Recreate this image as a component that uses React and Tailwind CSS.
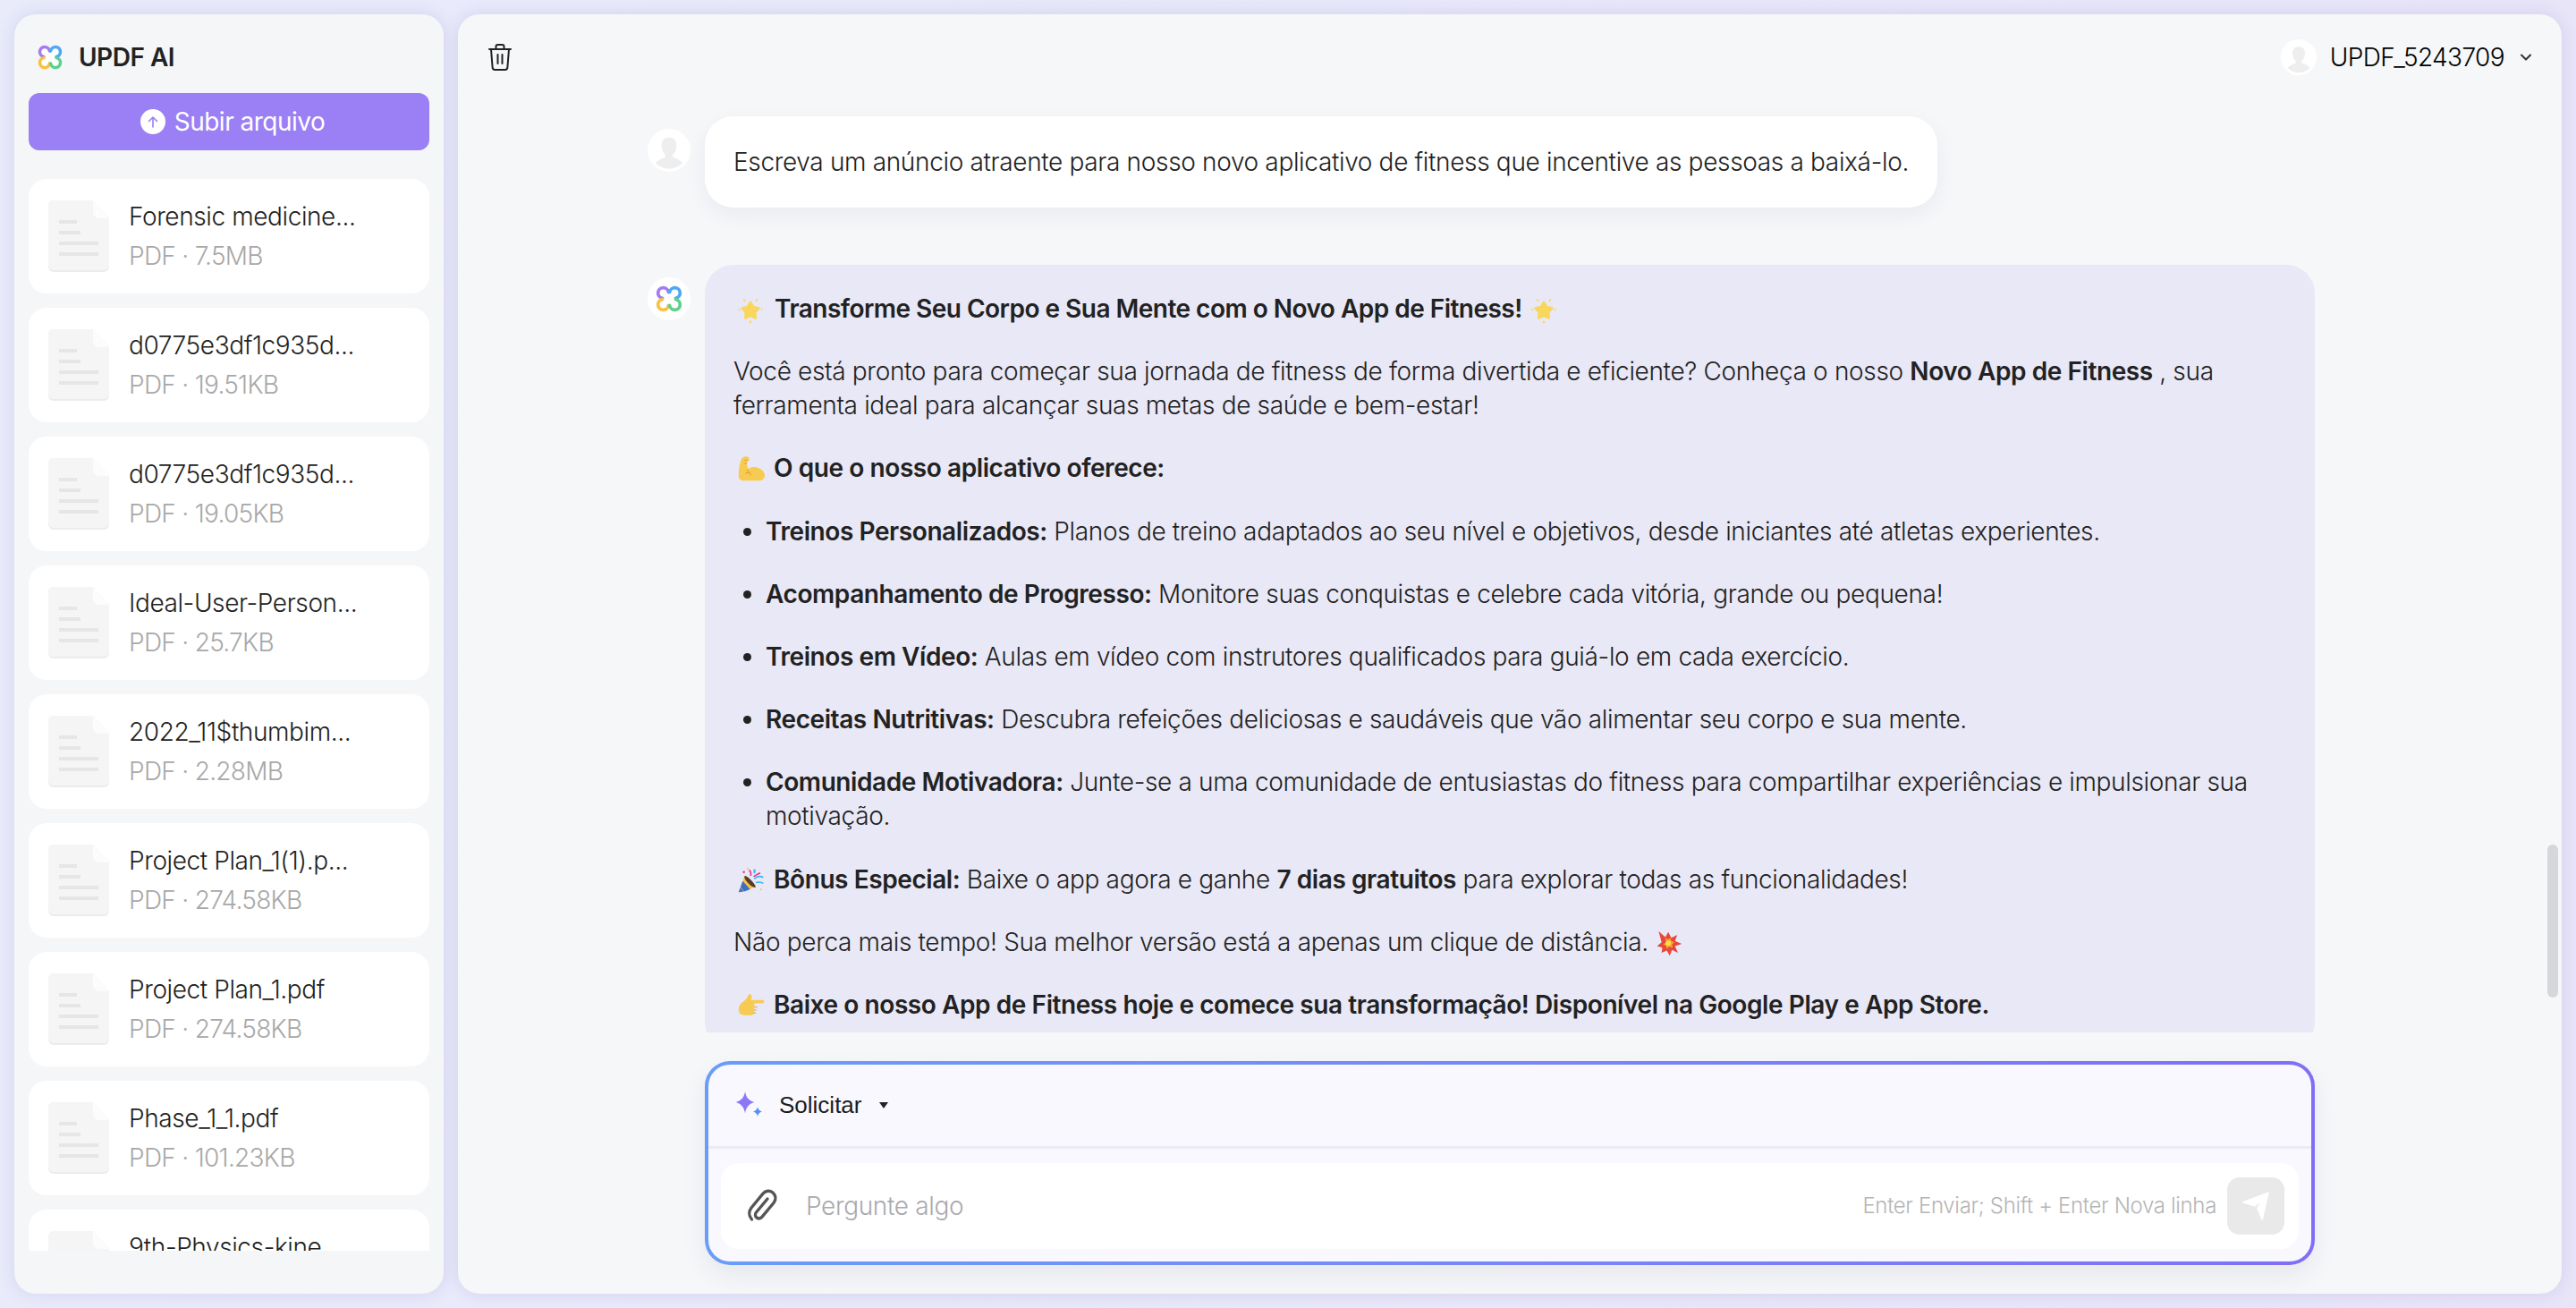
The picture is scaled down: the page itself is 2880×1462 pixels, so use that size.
import { ChevronDown } from 'lucide-react';

const files = [
  { name: 'Forensic medicine...', meta: 'PDF · 7.5MB' },
  { name: 'd0775e3df1c935d...', meta: 'PDF · 19.51KB' },
  { name: 'd0775e3df1c935d...', meta: 'PDF · 19.05KB' },
  { name: 'Ideal-User-Person...', meta: 'PDF · 25.7KB' },
  { name: '2022_11$thumbim...', meta: 'PDF · 2.28MB' },
  { name: 'Project Plan_1(1).p...', meta: 'PDF · 274.58KB' },
  { name: 'Project Plan_1.pdf', meta: 'PDF · 274.58KB' },
  { name: 'Phase_1_1.pdf', meta: 'PDF · 101.23KB' },
  { name: '9th-Physics-kine...', meta: 'PDF · 1.2MB' },
];

const bullets = [
  ['Treinos Personalizados:', ' Planos de treino adaptados ao seu nível e objetivos, desde iniciantes até atletas experientes.'],
  ['Acompanhamento de Progresso:', ' Monitore suas conquistas e celebre cada vitória, grande ou pequena!'],
  ['Treinos em Vídeo:', ' Aulas em vídeo com instrutores qualificados para guiá-lo em cada exercício.'],
  ['Receitas Nutritivas:', ' Descubra refeições deliciosas e saudáveis que vão alimentar seu corpo e sua mente.'],
  ['Comunidade Motivadora:', ' Junte-se a uma comunidade de entusiastas do fitness para compartilhar experiências e impulsionar sua motivação.'],
];

function Logo({ className }) {
  return (
    <svg viewBox="0 0 28 28" fill="none" className={className}>
      <path d="M14 14L6 6M14 14L22 6M14 14L6 22M14 14L22 22" stroke="#fff" strokeWidth="8" />
      <g strokeWidth="3.5" strokeLinecap="round">
        <path d="M13.400 7A5.500 5.500 0 1 0 7 13.400" stroke="#a77bf0" />
        <path d="M14.600 7A5.500 5.500 0 1 1 21 13.400" stroke="#4ea8f6" />
        <path d="M7 14.600A5.500 5.500 0 1 0 13.400 21" stroke="#f8c23d" />
        <path d="M21 14.600A5.500 5.500 0 1 1 14.600 21" stroke="#5fd08e" />
      </g>
    </svg>
  );
}

function Person({ className }) {
  return (
    <div className={`rounded-full bg-white overflow-hidden shrink-0 ${className}`}>
      <svg viewBox="0 0 40 40" className="w-full h-full">
        <path d="M20 8c4.500 0 7 3 7 7.500 0 4-1.500 7-3.500 8.500v2.500c3 1 7 2.500 9 5.500-3 3-7.500 5-12.500 5s-9.500-2-12.500-5c2-3 6-4.500 9-5.500V24c-2-1.500-3.500-4.500-3.500-8.500C13 11 15.500 8 20 8z" fill="#eeeeee" />
      </svg>
    </div>
  );
}

function FileIcon() {
  return (
    <svg viewBox="0 0 68 80" className="w-[68px] h-[80px] shrink-0">
      <path d="M6 0h44l18 20v54a6 6 0 0 1-6 6H6a6 6 0 0 1-6-6V6a6 6 0 0 1 6-6z" fill="#ececec" />
      <path d="M6 0h44l18 20v52a6 6 0 0 1-6 6H6a6 6 0 0 1-6-6V6a6 6 0 0 1 6-6z" fill="#f5f5f5" />
      <path d="M50 0l18 20H57a7 7 0 0 1-7-7z" fill="#fcfcfc" />
      <rect x="12" y="22" width="20" height="4" fill="#e6e6e6" />
      <rect x="12" y="34" width="24" height="4" fill="#e6e6e6" />
      <rect x="12" y="46" width="44" height="4" fill="#e6e6e6" />
      <rect x="12" y="58" width="44" height="4" fill="#e6e6e6" />
    </svg>
  );
}

function StarEmoji({ className = '' }) {
  return (
    <svg viewBox="0 0 28 28" className={`inline-block w-[28px] h-[28px] align-[-6px] ${className}`} fill="#f9d65c">
      <path
        d="M14 4.500L17.200 10L23.500 11.400L19.200 16.200L19.900 22.600L14 20L8.100 22.600L8.800 16.200L4.500 11.400L10.800 10z"
        stroke="#f9d65c"
        strokeWidth="2.400"
        strokeLinejoin="round"
      />
      <path d="M5.500 .5L9 3l-2 1.500zM22.500 .5L19 3l2 1.500zM0 11.500l2.500 1-.8 2.500zM28 11.500l-2.500 1 .8 2.500zM14 24.500l1.500 3.500h-3z" />
    </svg>
  );
}

function MuscleEmoji() {
  return (
    <svg viewBox="0 0 36 36" className="inline-block w-[30px] h-[30px] align-[-6px] ml-[5px] mr-[10px]">
      <path d="M6 3c3-2 8-2 9 1 1 2.500-1 4-3 5 0 3 .5 6 2 9 4-3 10-3 14-1 5 2 8 6 8 10 0 4-3 7-8 7H8c-4 0-7-2-7-6 0-9 1-19 5-25z" fill="#f7cb52" />
      <path d="M9 7c2-1 3.500-.8 4-.2M9 11c1.500 0 2.500-.5 3-1.500M12 19l3 4M10 24l5-1 3 4" stroke="#d98e2b" strokeWidth="1" fill="none" />
    </svg>
  );
}

function PartyEmoji() {
  return (
    <svg viewBox="0 0 36 36" className="inline-block w-[30px] h-[30px] align-[-6px] ml-[5px] mr-[10px]">
      <path d="M1 34L9 12l15 15z" fill="#f4c542" />
      <path d="M3.500 27l3-8 10 11-8 3zM1 34l2-6 5 5z" fill="#3f6ec9" />
      <path d="M9 12c4 0 14 10 15 15-3 1-7-1-10-5-3-3-6-7-5-10z" fill="#5b3a29" />
      <path d="M22 16c4-4 8-4 12-2M24 21c3-1 6-1 10 1" stroke="#38b6f0" strokeWidth="2" fill="none" />
      <path d="M17 12c1-3 0-6-2-8M21 13c3-2 6-4 9-5" stroke="#e8358f" strokeWidth="2" fill="none" />
      <circle cx="8" cy="7" r="1.500" fill="#e8358f" />
      <circle cx="13" cy="2" r="1.200" fill="#f4c542" />
      <path d="M21 3l3 1-1 5-2-1z" fill="#38b6f0" />
      <circle cx="31" cy="30" r="1.200" fill="#f4c542" />
    </svg>
  );
}

function HandEmoji() {
  return (
    <svg viewBox="0 0 36 36" className="inline-block w-[30px] h-[30px] align-[-6px] ml-[5px] mr-[10px]">
      <path d="M1 24c0-5 2-9 6-11 3-2 6-5 7-9 .6-2 4-2 4.500 1 .4 2-.5 4-1 5.500H33c3 0 3 4.500 0 4.500H22v12c0 3-3 4-6 4h-5C5 31 1 29 1 24z" fill="#f7cb52" />
      <path d="M22 20h4M22 24h3M21 28h3" stroke="#d98e2b" strokeWidth="1" fill="none" />
    </svg>
  );
}

function BoomEmoji() {
  return (
    <svg viewBox="0 0 36 36" className="inline-block w-[30px] h-[30px] align-[-7px] ml-[1px]">
      <path d="M4 1l9 8 4-7 4 8 8-4-3 8 9 4-9 3 4 9-8-4-3 8-4-7-7 3 1-7-7-2 6-5z" fill="#e8483c" />
      <path d="M13 10l4 2 3-2 1 4 4 2-3 3 1 4-5-1-3 3-1-5-4-1 4-3z" fill="#f4a62a" />
      <circle cx="17" cy="17" r="3.500" fill="#fbdc4c" />
    </svg>
  );
}

function Sparkle() {
  return (
    <svg viewBox="0 0 32 32" className="w-[32px] h-[32px] shrink-0">
      <path d="M11 0c1 6.500 4 10 10.500 12C15 14 12 17.500 11 24.500 10 17.500 7 14 .5 12 7 10 10 6.500 11 0z" fill="#8b78f6" />
      <path d="M25 17c.5 3 2 4.500 5 5.500-3 1-4.500 2.500-5 5.500-.5-3-2-4.500-5-5.500 3-1 4.500-2.500 5-5.500z" fill="#4f93f5" />
    </svg>
  );
}

export default function App() {
  return (
    <div
      className="flex w-screen h-screen gap-[16px] p-[16px] overflow-hidden bg-gradient-to-r from-[#e9ebfb] to-[#e8e5f9] text-[#222222]"
      style={{ fontFamily: 'Inter, "Noto Sans", sans-serif' }}
    >
      {/* Sidebar */}
      <aside className="flex flex-col w-[480px] shrink-0 rounded-[24px] bg-[#f5f6f8] px-[16px] pb-[48px] shadow-[0_0_18px_rgba(90,90,170,0.16)]">
        <div className="flex items-center h-[88px] pt-[8px] pl-[10px] gap-[18px]">
          <Logo className="w-[28px] h-[28px]" />
          <span className="text-[28px] font-semibold tracking-[-0.5px]">UPDF AI</span>
        </div>
        <button className="flex items-center justify-center gap-[10px] h-[64px] pl-[8px] rounded-[12px] bg-[#9b7ff5] text-white text-[28px] font-normal tracking-[-0.5px]">
          <span className="flex items-center justify-center w-[28px] h-[28px] rounded-full bg-white">
            <svg viewBox="0 0 16 16" className="w-[16px] h-[16px]" fill="none" stroke="#9b7ff5" strokeWidth="1.600" strokeLinecap="round" strokeLinejoin="round">
              <path d="M8 14V3M3.500 7.500L8 3l4.500 4.500" />
            </svg>
          </span>
          Subir arquivo
        </button>
        <div className="flex flex-col flex-1 min-h-0 gap-[16px] mt-[32px] overflow-hidden">
          {files.map((f, i) => (
            <div key={i} className="flex items-center shrink-0 h-[128px] rounded-[20px] bg-white pl-[22px]">
              <FileIcon />
              <div className="ml-[22px]">
                <div className="text-[28px] leading-[44px] font-light tracking-[-0.4px]">{f.name}</div>
                <div className="text-[28px] leading-[44px] font-light tracking-[-0.7px] text-[#a8a8a8]">{f.meta}</div>
              </div>
            </div>
          ))}
        </div>
      </aside>

      {/* Main panel */}
      <main className="relative flex flex-col flex-1 min-w-0 rounded-[24px] bg-[#f6f7f9] shadow-[0_0_18px_rgba(90,90,170,0.16)]">
        <header className="flex items-center justify-between h-[96px] shrink-0 pl-[34px] pr-[30px]">
          <svg viewBox="0 0 26 30" className="w-[26px] h-[30px]" fill="none" stroke="#222222" strokeWidth="2" strokeLinecap="round" strokeLinejoin="round">
            <path d="M1 6h24M8.500 6V3a2 2 0 0 1 2-2h5a2 2 0 0 1 2 2v3M3 6l1.600 20a3 3 0 0 0 3 3h10.800a3 3 0 0 0 3-3L23 6M10.500 12v10M15.500 12v10" />
          </svg>
          <div className="flex items-center">
            <Person className="w-[40px] h-[40px]" />
            <span className="ml-[15px] text-[28px] font-light text-black tracking-[-0.6px]">UPDF_5243709</span>
            <ChevronDown strokeWidth={2.5} className="ml-[14px] w-[20px] h-[20px] text-[#333333]" />
          </div>
        </header>

        <div className="flex-1 min-h-0 overflow-hidden pt-[18px] pl-[212px] text-[28px] leading-[38px] font-light tracking-[-0.34px]">
          <div className="flex gap-[16px]">
            <Person className="w-[48px] h-[48px] mt-[14px]" />
            <div className="rounded-[32px] bg-white px-[32px] py-[32px] shadow-[0_8px_24px_rgba(40,40,80,0.06)]">
              Escreva um anúncio atraente para nosso novo aplicativo de fitness que incentive as pessoas a baixá-lo.
            </div>
          </div>
          <div className="flex gap-[16px] mt-[64px]">
            <div className="flex items-center justify-center w-[48px] h-[48px] mt-[14px] rounded-full bg-white shrink-0">
              <Logo className="w-[30px] h-[30px]" />
            </div>
            <div className="w-[1800px] shrink-0 rounded-[32px] bg-[#e9e8f6] px-[32px] pt-[30px] pb-[32px] [&_b]:font-semibold [&_b]:tracking-[-0.42px]">
              <p className="[&_b]:tracking-[-0.52px]">
                <StarEmoji className="ml-[5px] mr-[13px]" />
                <b>Transforme Seu Corpo e Sua Mente com o Novo App de Fitness!</b>
                <StarEmoji className="ml-[10px]" />
              </p>
              <p className="mt-[32.200px]">
                Você está pronto para começar sua jornada de fitness de forma divertida e eficiente? Conheça o nosso <b>Novo App de Fitness</b> , sua ferramenta ideal para alcançar suas metas de saúde e bem-estar!
              </p>
              <p className="mt-[32.200px]">
                <MuscleEmoji />
                <b>O que o nosso aplicativo oferece:</b>
              </p>
              <ul className="list-disc pl-[36px]">
                {bullets.map(([title, text]) => (
                  <li key={title} className="mt-[32.200px]">
                    <b>{title}</b>{text}
                  </li>
                ))}
              </ul>
              <p className="mt-[32.200px]">
                <PartyEmoji />
                <b>Bônus Especial:</b> Baixe o app agora e ganhe <b>7 dias gratuitos</b> para explorar todas as funcionalidades!
              </p>
              <p className="mt-[32.200px]">
                Não perca mais tempo! Sua melhor versão está a apenas um clique de distância. <BoomEmoji />
              </p>
              <p className="mt-[32.200px]">
                <HandEmoji />
                <b>Baixe o nosso App de Fitness hoje e comece sua transformação! Disponível na Google Play e App Store.</b>
              </p>
            </div>
          </div>
        </div>

        {/* Overlay scrollbar */}
        <div className="absolute right-[4px] top-[928px] w-[12px] h-[171px] rounded-full bg-[#d6d7db]" />

        {/* Prompt box */}
        <div className="shrink-0 h-[292px] pt-[32px] pl-[276px]">
          <div className="w-[1800px] h-[228px] rounded-[28px] bg-gradient-to-r from-[#6a9cf9] to-[#7f6ff6] p-[4px] shadow-[0_12px_28px_rgba(40,40,80,0.07)]">
            <div className="flex flex-col h-full rounded-[24px] bg-[#f9f8fe]">
              <div className="flex items-center h-[94px] shrink-0 pl-[30px] border-b-[3px] border-[#ecebf3]">
                <Sparkle />
                <span className="ml-[17px] text-[26px] text-[#1c1c1c]" style={{ fontFamily: '"Liberation Sans", sans-serif' }}>Solicitar</span>
                <span className="ml-[20px] w-0 h-0 border-x-[5px] border-x-transparent border-t-[7px] border-t-[#222222]" />
              </div>
              <div className="flex items-center h-[96px] mt-[16px] mx-[14px] rounded-[20px] bg-white pl-[30px] pr-[16px]">
                <svg viewBox="0 0 34 38" className="w-[34px] h-[38px] shrink-0" fill="none" stroke="#555555" strokeWidth="3.400" strokeLinecap="round" strokeLinejoin="round">
                  <path d="M22 11L9.500 26c-2 2.500-1 5 .5 6 2 1.300 4.500 1 6-.8L29 15.500c3-4 2.300-8.500-1-11.500-3.300-2.600-8-2.300-11 1.200L4 21c-3 4-3 9 .5 13" />
                </svg>
                <span className="ml-[31px] text-[28px] font-light text-[#a9a9ae] tracking-[-0.35px]">Pergunte algo</span>
                <span className="ml-auto text-[24px] font-light text-[#b5b5b5] tracking-[-0.34px]">Enter Enviar; Shift + Enter Nova linha</span>
                <button className="flex items-center justify-center ml-[12px] w-[64px] h-[64px] rounded-[14px] bg-[#e9e9e9]">
                  <svg viewBox="0 0 34 34" className="w-[34px] h-[34px]" fill="#ffffff">
                    <path d="M32 1L25 32c-.3 1-1.200 1-1.500.2l-5.500-13 3.500-6-6 4.500-13-4.300c-.8-.3-.8-1 0-1.400z" />
                  </svg>
                </button>
              </div>
            </div>
          </div>
        </div>
      </main>
    </div>
  );
}
